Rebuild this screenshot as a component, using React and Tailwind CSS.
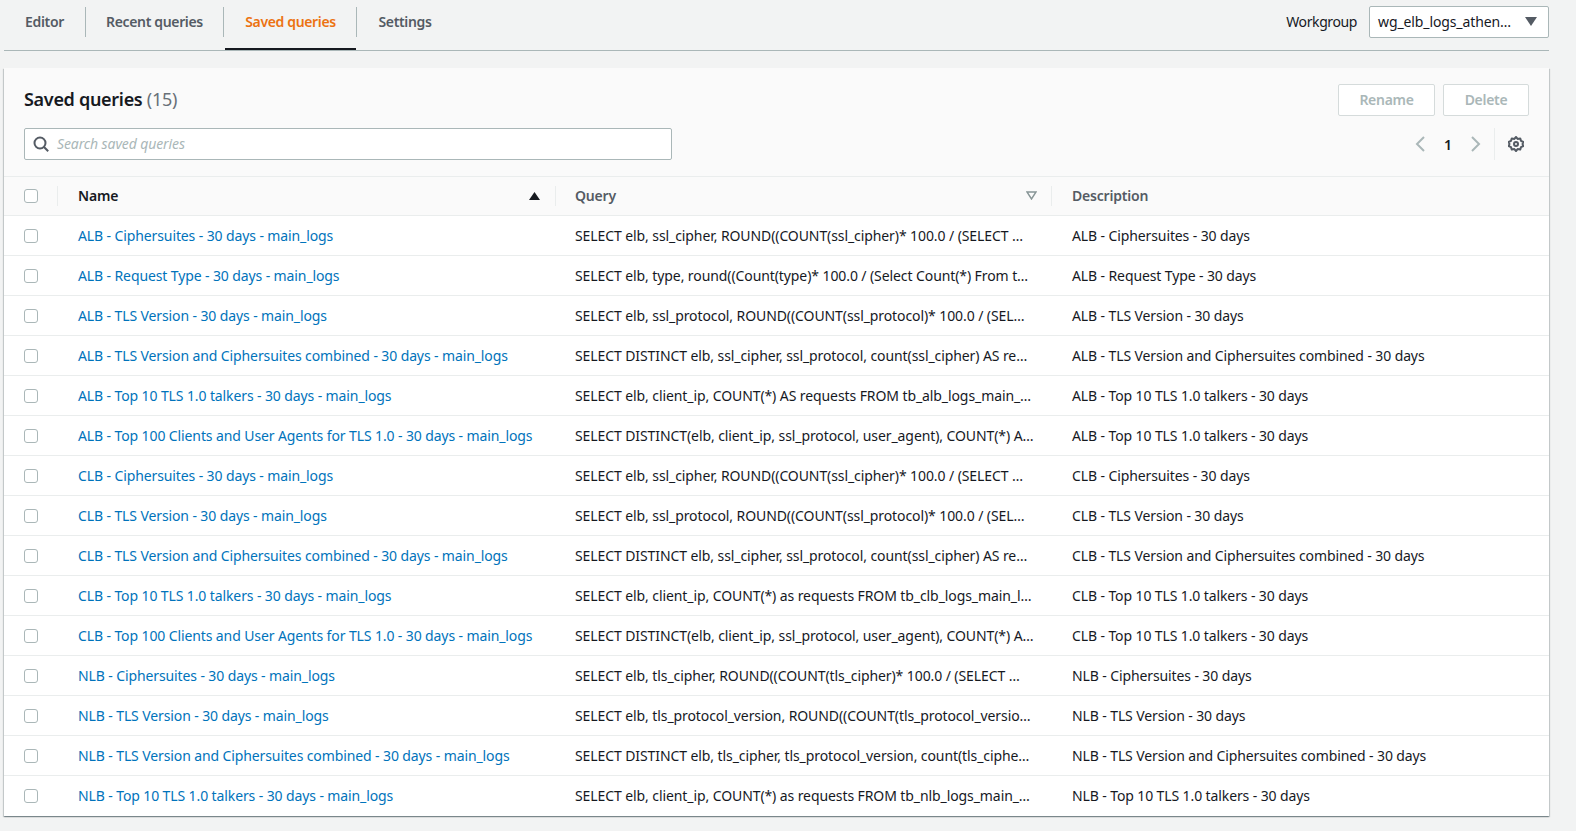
import React from "react";

const rows = [
  ["ALB - Ciphersuites - 30 days - main_logs", "SELECT elb, ssl_cipher, ROUND((COUNT(ssl_cipher)* 100.0 / (SELECT …", "ALB - Ciphersuites - 30 days"],
  ["ALB - Request Type - 30 days - main_logs", "SELECT elb, type, round((Count(type)* 100.0 / (Select Count(*) From t…", "ALB - Request Type - 30 days"],
  ["ALB - TLS Version - 30 days - main_logs", "SELECT elb, ssl_protocol, ROUND((COUNT(ssl_protocol)* 100.0 / (SEL…", "ALB - TLS Version - 30 days"],
  ["ALB - TLS Version and Ciphersuites combined - 30 days - main_logs", "SELECT DISTINCT elb, ssl_cipher, ssl_protocol, count(ssl_cipher) AS re…", "ALB - TLS Version and Ciphersuites combined - 30 days"],
  ["ALB - Top 10 TLS 1.0 talkers - 30 days - main_logs", "SELECT elb, client_ip, COUNT(*) AS requests FROM tb_alb_logs_main_…", "ALB - Top 10 TLS 1.0 talkers - 30 days"],
  ["ALB - Top 100 Clients and User Agents for TLS 1.0 - 30 days - main_logs", "SELECT DISTINCT(elb, client_ip, ssl_protocol, user_agent), COUNT(*) A…", "ALB - Top 10 TLS 1.0 talkers - 30 days"],
  ["CLB - Ciphersuites - 30 days - main_logs", "SELECT elb, ssl_cipher, ROUND((COUNT(ssl_cipher)* 100.0 / (SELECT …", "CLB - Ciphersuites - 30 days"],
  ["CLB - TLS Version - 30 days - main_logs", "SELECT elb, ssl_protocol, ROUND((COUNT(ssl_protocol)* 100.0 / (SEL…", "CLB - TLS Version - 30 days"],
  ["CLB - TLS Version and Ciphersuites combined - 30 days - main_logs", "SELECT DISTINCT elb, ssl_cipher, ssl_protocol, count(ssl_cipher) AS re…", "CLB - TLS Version and Ciphersuites combined - 30 days"],
  ["CLB - Top 10 TLS 1.0 talkers - 30 days - main_logs", "SELECT elb, client_ip, COUNT(*) as requests FROM tb_clb_logs_main_l…", "CLB - Top 10 TLS 1.0 talkers - 30 days"],
  ["CLB - Top 100 Clients and User Agents for TLS 1.0 - 30 days - main_logs", "SELECT DISTINCT(elb, client_ip, ssl_protocol, user_agent), COUNT(*) A…", "CLB - Top 10 TLS 1.0 talkers - 30 days"],
  ["NLB - Ciphersuites - 30 days - main_logs", "SELECT elb, tls_cipher, ROUND((COUNT(tls_cipher)* 100.0 / (SELECT …", "NLB - Ciphersuites - 30 days"],
  ["NLB - TLS Version - 30 days - main_logs", "SELECT elb, tls_protocol_version, ROUND((COUNT(tls_protocol_versio…", "NLB - TLS Version - 30 days"],
  ["NLB - TLS Version and Ciphersuites combined - 30 days - main_logs", "SELECT DISTINCT elb, tls_cipher, tls_protocol_version, count(tls_ciphe…", "NLB - TLS Version and Ciphersuites combined - 30 days"],
  ["NLB - Top 10 TLS 1.0 talkers - 30 days - main_logs", "SELECT elb, client_ip, COUNT(*) as requests FROM tb_nlb_logs_main_…", "NLB - Top 10 TLS 1.0 talkers - 30 days"],
];

function Box() {
  return <span className="block w-[14px] h-[14px] rounded-[3px] border border-[#aab7b8] bg-white" />;
}

function Tab({ children, active, className }) {
  return (
    <div className={`h-[49px] mt-px pb-[7px] flex items-center justify-center font-semibold tracking-[-0.35px] whitespace-nowrap border-b-2 ${active ? "text-[#ec7211] border-[#16191f]" : "text-[#545b64] border-transparent"} ${className}`}>
      {children}
    </div>
  );
}

function Sep() {
  return <div className="w-px h-[30px] mt-[7px] bg-[#aab7b8]" />;
}

export default function App() {
  return (
    <div className="w-[1576px] h-[831px] overflow-hidden bg-[#f2f3f3] text-[14px] text-[#16191f] pl-1 pr-[27px] tracking-[-0.11px]" style={{ fontFamily: '"Noto Sans", sans-serif' }}>
      <div className="flex items-start h-[51px] border-b border-[#aab7b8]">
        <Tab className="w-[81px]">Editor</Tab>
        <Sep />
        <Tab className="w-[137px]">Recent queries</Tab>
        <Sep />
        <Tab active className="w-[131px] ml-px">Saved queries</Tab>
        <Sep />
        <Tab className="w-[96px]">Settings</Tab>
        <div className="ml-auto flex items-center h-[31px] mt-[6px]">
          <span className="mr-3 tracking-[-0.4px]">Workgroup</span>
          <div className="w-[180px] h-[32px] bg-white border border-[#aab7b8] rounded-[2px] flex items-center justify-between pl-2 pr-[11px]">
            <span className="whitespace-nowrap">wg_elb_logs_athen…</span>
            <svg width="12" height="9" viewBox="0 0 12 9"><path d="M0 0h12L6 9z" fill="#545b64" /></svg>
          </div>
        </div>
      </div>

      <div className="mt-[17px] h-[748px] bg-white shadow-[0_1px_1px_0_rgba(0,28,36,0.3),1px_1px_1px_0_rgba(0,28,36,0.15),-1px_1px_1px_0_rgba(0,28,36,0.15)]">
        <div className="h-[109px] bg-[#fafafa] border-b border-[#eaeded] flex flex-col">
          <div className="flex items-start justify-between pl-5 pr-5 pt-4">
            <h2 className="text-[18px] font-semibold leading-[30px] tracking-[-0.3px]">Saved queries <span className="font-normal text-[#687078]">(15)</span></h2>
            <div className="flex gap-2 tracking-[-0.3px]">
              <div className="w-[97px] h-[32px] flex items-center justify-center border border-[#d5dbdb] bg-white rounded-[2px] font-semibold text-[#aab7b8] pb-px">Rename</div>
              <div className="w-[86px] h-[32px] flex items-center justify-center border border-[#d5dbdb] bg-white rounded-[2px] font-semibold text-[#aab7b8] pb-px">Delete</div>
            </div>
          </div>
          <div className="flex items-center justify-between pl-5 pr-[21px] mt-3">
            <div className="w-[648px] h-[32px] flex items-center bg-white border border-[#aab7b8] rounded-[2px] pl-2">
              <svg width="16" height="16" viewBox="0 0 16 16" fill="none" stroke="#545b64" strokeWidth="2"><circle cx="7" cy="7" r="5.5" /><path d="M11 11l4.2 4.2" /></svg>
              <span className="ml-2 italic text-[#aab7b8] pb-px">Search saved queries</span>
            </div>
            <div className="flex items-center h-[32px] mr-[4px]">
              <svg width="12" height="16" viewBox="0 0 12 16" fill="none" stroke="#aab7b8" strokeWidth="2"><path d="M10 1L3 8l7 7" /></svg>
              <span className="w-[44px] text-center font-semibold">1</span>
              <svg width="12" height="16" viewBox="0 0 12 16" fill="none" stroke="#aab7b8" strokeWidth="2"><path d="M2 1l7 7-7 7" /></svg>
              <div className="w-px h-[32px] bg-[#eaeded] ml-[12px] mr-[13px]" />
              <svg width="16" height="16" viewBox="0 0 16 16" fill="none" stroke="#545b64" strokeWidth="2"><path d="M8 1l1.6 1.9 2.6-.5.8 2.5 2.3 1.1-.8 2 .8 2-2.3 1.1-.8 2.5-2.6-.5L8 15l-1.6-1.9-2.6.5-.8-2.5L.7 10l.8-2-.8-2L3 4.9l.8-2.5 2.6.5z" strokeLinejoin="round" /><circle cx="8" cy="8" r="2" /></svg>
            </div>
          </div>
        </div>
        <div className="h-[39px] pb-px flex items-center bg-[#fafafa] border-b border-[#eaeded] font-semibold tracking-[-0.2px]">
          <div className="w-[53px] pl-5 shrink-0 flex items-center"><Box /></div>
          <div className="w-px h-[20px] bg-[#eaeded]" />
          <div className="w-[497px] shrink-0 pl-5 pr-[15px] flex items-center justify-between">
            <span>Name</span>
            <svg width="11" height="8" viewBox="0 0 11 8"><path d="M0 8h11L5.5 0z" fill="#16191f" /></svg>
          </div>
          <div className="w-px h-[20px] bg-[#eaeded]" />
          <div className="w-[495px] shrink-0 pl-[19px] pr-[14px] flex items-center justify-between text-[#545b64]">
            <span>Query</span>
            <svg width="11" height="9" viewBox="0 0 11 9"><path d="M1 1h9L5.5 8z" fill="none" stroke="#879596" strokeWidth="1.4" /></svg>
          </div>
          <div className="w-px h-[20px] bg-[#eaeded]" />
          <div className="pl-5 text-[#545b64]">Description</div>
        </div>
        {rows.map((r, i) => (
          <div key={i} className={`h-[40px] flex items-center border-b ${i < rows.length - 1 ? "border-[#eaeded]" : "border-transparent"}`}>
            <div className="w-[74px] pl-5 shrink-0"><Box /></div>
            <div className="w-[497px] shrink-0 text-[#0073bb] whitespace-nowrap">{r[0]}</div>
            <div className="w-[497px] shrink-0 whitespace-nowrap tracking-[-0.09px]">{r[1]}</div>
            <div className="whitespace-nowrap">{r[2]}</div>
          </div>
        ))}
      </div>
    </div>
  );
}
